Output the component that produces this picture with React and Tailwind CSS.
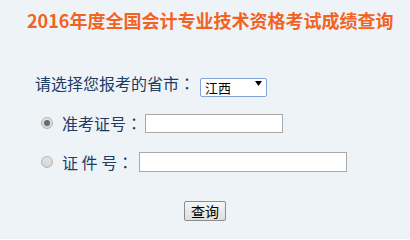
import React, { useState } from "react";

// 2016 accounting exam score lookup form
const Radio = ({ checked, onClick }) => (
  <span
    onClick={onClick}
    className="flex h-[12px] w-[12px] shrink-0 items-center justify-center rounded-full border border-[#b4b4b4] bg-gradient-to-b from-[#e4e4e4] to-[#d4d4d4]"
  >
    {checked && <span className="h-[6px] w-[6px] rounded-full bg-[#6a6a6a]" />}
  </span>
);

// fullwidth colon, centred in its box
const Colon = () => (
  <span className="font-['Noto_Sans_CJK_JP',sans-serif]">：</span>
);

const App = () => {
  const [mode, setMode] = useState("ticket");
  const [province, setProvince] = useState("江西");

  return (
    <div className="h-[239px] w-full bg-[#eef3f8] font-['Noto_Sans_CJK_SC',sans-serif] text-[#203c64]">
      {/* Title */}
      <div className="pl-[27px] pt-[8px]">
        <h1 className="h-[24px] text-[18px] font-bold leading-[24px] text-[#f26322]">
          2016年度全国会计专业技术资格考试成绩查询
        </h1>
      </div>

      {/* Province */}
      <div className="mt-[41px] flex h-[20px] items-center pl-[35px]">
        <span className="text-[16px] leading-[20px]">
          请选择您报考的省市<Colon />
        </span>
        <div className="relative ml-[5px] h-[19px] w-[67px]">
          <select
            value={province}
            onChange={(e) => setProvince(e.target.value)}
            className="h-full w-full appearance-none rounded-[2px] border border-[#86a3d6] bg-white pl-[4px] text-[13px] leading-[17px] text-black outline-none"
          >
            <option>江西</option>
            <option>北京</option>
            <option>上海</option>
          </select>
          <svg
            className="pointer-events-none absolute right-[5px] top-[7px]"
            width="7"
            height="5"
            viewBox="0 0 7 5"
          >
            <path d="M0 0H7L3.5 5Z" fill="#000" />
          </svg>
        </div>
      </div>

      {/* Ticket number */}
      <div className="mt-[20px] flex h-[20px] items-center pl-[41px]">
        <Radio checked={mode === "ticket"} onClick={() => setMode("ticket")} />
        <span className="ml-[9px] text-[16px] leading-[20px]">
          准考证号<Colon />
        </span>
        <input className="ml-[3px] h-[19px] w-[138px] border border-[#a9a9a9] bg-white outline-none" />
      </div>

      {/* ID number */}
      <div className="mt-[19px] flex h-[20px] items-center pl-[41px]">
        <Radio checked={mode === "id"} onClick={() => setMode("id")} />
        <span className="ml-[9px] text-[16px] leading-[20px]">
          证 件 号<Colon />
        </span>
        <input className="ml-[6px] h-[20px] w-[208px] border border-[#a9a9a9] bg-white outline-none" />
      </div>

      {/* Submit */}
      <div className="mt-[29px] flex justify-center">
        <button className="h-[20px] w-[42px] rounded-[2px] border border-[#8c8c8c] bg-gradient-to-b from-[#f6f6f6] to-[#dedede] text-[14px] leading-[18px] text-black">
          查询
        </button>
      </div>
    </div>
  );
};

export default App;
